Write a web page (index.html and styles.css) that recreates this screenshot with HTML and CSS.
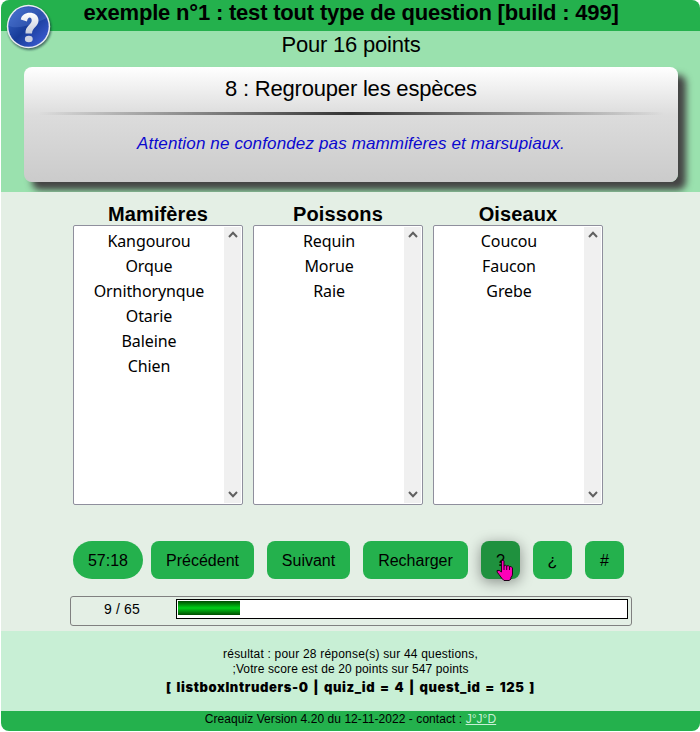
FILE: index.html
```html
<!DOCTYPE html>
<html lang="fr">
<head>
<meta charset="utf-8">
<title>Creaquiz</title>
<link rel="stylesheet" href="styles.css">
</head>
<body>
<div class="quiz">
  <header class="title"><span>exemple n°1 : test tout type de question [build : 499]</span></header>
  <svg class="help" width="50" height="52" viewBox="0 0 50 52">
    <defs>
      <linearGradient id="ball" x1="0" y1="0" x2="1" y2="1"><stop offset="0" stop-color="#3f6ed0"/><stop offset=".5" stop-color="#173b98"/><stop offset="1" stop-color="#4563df"/></linearGradient>
      <linearGradient id="mark" x1="0" y1="0" x2="0" y2="1"><stop offset="0" stop-color="#fff"/><stop offset="1" stop-color="#c5cbdc"/></linearGradient>
      <filter id="soft" x="-20%" y="-20%" width="140%" height="140%"><feGaussianBlur stdDeviation="1.2"/></filter>
    </defs>
    <circle cx="25.5" cy="25.200" r="21.800" fill="#123" opacity=".6" filter="url(#soft)"/>
    <circle cx="24.500" cy="23.500" r="21.700" fill="#e9ecf2"/>
    <circle cx="24.500" cy="23.500" r="20.200" fill="url(#ball)"/>
    <path d="M4.800 23C15 27 29 21 43 15C37 1 12 0 5.700 17Z" fill="#5b82d8" opacity=".35"/>
    <path d="M16.800 16.500C18 7 34.800 7.500 34.500 17.500C34.300 24 28.300 24 28 30.500H21.500C21 22.500 27.700 22 27.700 17.400C27.700 13.500 23.500 13.500 23 18.500Z" fill="url(#mark)"/>
    <ellipse cx="24.800" cy="36" rx="3.900" ry="3.200" fill="#ccd1e2"/>
  </svg>
  <section class="intro">
    <div class="points"><span>Pour 16 points</span></div>
    <div class="card">
      <h1><span>8 : Regrouper les espèces</span></h1>
      <div class="rule"></div>
      <p><span>Attention ne confondez pas mammifères et marsupiaux.</span></p>
    </div>
  </section>
  <main>
    <div class="lists">
      <div class="group"><h2>Mamifères</h2><div class="listbox"><ul><li>Kangourou</li><li>Orque</li><li>Ornithorynque</li><li>Otarie</li><li>Baleine</li><li>Chien</li></ul>
        <div class="scroll"><svg width="10" height="7" viewBox="0 0 10 7"><path d="M1 6L5 1.800L9 6"/></svg><svg width="10" height="7" viewBox="0 0 10 7"><path d="M1 1L5 5.200L9 1"/></svg></div></div></div>
      <div class="group"><h2>Poissons</h2><div class="listbox"><ul><li>Requin</li><li>Morue</li><li>Raie</li></ul>
        <div class="scroll"><svg width="10" height="7" viewBox="0 0 10 7"><path d="M1 6L5 1.800L9 6"/></svg><svg width="10" height="7" viewBox="0 0 10 7"><path d="M1 1L5 5.200L9 1"/></svg></div></div></div>
      <div class="group"><h2>Oiseaux</h2><div class="listbox"><ul><li>Coucou</li><li>Faucon</li><li>Grebe</li></ul>
        <div class="scroll"><svg width="10" height="7" viewBox="0 0 10 7"><path d="M1 6L5 1.800L9 6"/></svg><svg width="10" height="7" viewBox="0 0 10 7"><path d="M1 1L5 5.200L9 1"/></svg></div></div></div>
    </div>
    <div class="buttons">
      <div class="btn timer">57:18</div>
      <div class="btn prev">Précédent</div>
      <div class="btn next">Suivant</div>
      <div class="btn reload">Recharger</div>
      <div class="btn small active">?<svg class="hand" width="18" height="23" viewBox="0 0 18 23"><path d="M6 1.500Q7.500 .5 8 2V7Q9.500 5.500 10.700 7Q12.300 6 13.500 7.500Q15.500 7 16.500 9V15Q16.500 17 15 18.500V20L13 21.500H8L6 19.500L3 15.500Q.5 13 1 11.500Q3 10.500 5.500 13V2Z" fill="#ff00b8" stroke="#200018"/><path d="M8 7V11M10.700 7V11M13.500 7.500V11" stroke="#200018" fill="none"/></svg></div>
      <div class="btn small">¿</div>
      <div class="btn small">#</div>
    </div>
    <div class="progress"><span class="count">9 / 65</span><div class="track"><div class="bar"></div></div></div>
  </main>
  <section class="result">
    <div class="score">résultat : pour 28 réponse(s) sur 44 questions,</div>
    <div class="score total">;Votre score est de 20 points sur 547 points</div>
    <div class="ids">[ listboxIntruders-0 | quiz_id = 4 | quest_id = 125 ]</div>
  </section>
  <footer><span>Creaquiz Version 4.20 du 12-11-2022 - contact : <a href="#">J°J°D</a></span></footer>
</div>
</body>
</html>
```
FILE: styles.css
```css
* { box-sizing: border-box; }
body { margin: 0; background: #fff; color: #000; font-family: "Liberation Sans", Arial, sans-serif; overflow: hidden; }
h1, h2, p, ul { margin: 0; padding: 0; }
.quiz { position: relative; margin-left: 1px; height: 731px; border-radius: 8px; overflow: hidden; text-align: center; }
.title { height: 31px; padding-left: 1px; background: #24b14d; font-size: 22px; line-height: 25px; font-weight: bold; letter-spacing: -.19px; white-space: nowrap; }
.help { position: absolute; left: 3px; top: 3px; }
.intro { height: 161px; background: #9ae1ae; overflow: hidden; }
.points { height: 36px; font-size: 22px; line-height: 27px; letter-spacing: -.2px; padding-left: 1px; }
.card { margin: 0 22px 0 23px; height: 115px; border-radius: 8px; background: linear-gradient(#fff, #dcdcdc 42%, #cbcbcb); box-shadow: 8px 8px 7px #444; }
h1 { height: 45px; font-size: 22px; line-height: 43px; font-weight: normal; letter-spacing: -.2px; }
.rule { height: 3px; margin: 0 14px; background: linear-gradient(90deg, transparent, #333 50%, transparent); }
p { font-size: 17px; font-style: italic; line-height: 20px; padding-top: 19px; color: #0b08cf; letter-spacing: .14px; }
main { height: 439px; background: #e4efe5; }
.lists { display: flex; gap: 10px; padding: 10px 0 0 72px; }
.group { width: 170px; }
h2 { height: 23px; line-height: 24px; font-size: 20px; letter-spacing: .12px; }
.listbox { height: 280px; display: flex; padding: 1px; background: #fff; border: 1px solid #8f8f9d; border-radius: 2px; }
ul { flex: 1; list-style: none; padding: 2px 1px 0 0; }
li { height: 25px; font: 16px/25px "Noto Sans", sans-serif; letter-spacing: -.1px; }
.scroll { width: 17px; background: #f0f0f0; display: flex; flex-direction: column; justify-content: space-between; align-items: center; padding: 4px 0 5px; }
.scroll path { fill: none; stroke: #606060; stroke-width: 2; }
.buttons { display: flex; padding: 36px 0 0 72px; }
.btn { position: relative; height: 38px; line-height: 39px; background: #24b14d; border-radius: 8px; font-size: 16px; margin-right: 13px; }
.timer { width: 70px; border-radius: 19px; margin-right: 8px; }
.prev { width: 103px; }
.next { width: 83px; }
.reload { width: 105px; }
.small { width: 39px; }
.active { background: #1f913e; box-shadow: 0 3px 14px rgba(0,0,0,.4); }
.hand { position: absolute; left: 15px; top: 18px; }
.progress { display: flex; width: 562px; height: 30px; margin: 17px 0 0 69px; border: 1px solid #808080; border-radius: 3px; }
.count { width: 105px; padding-right: 3px; font-size: 14px; line-height: 25px; letter-spacing: .15px; }
.track { width: 452px; height: 20px; margin-top: 2px; padding: 1px; border: 1px solid #000; background: #fff; }
.bar { width: 62px; height: 14px; background: linear-gradient(#004b00, #00d018 50%, #004b00); }
.result { height: 80px; padding-top: 16px; background: #c8efd5; }
.score { font-size: 12px; line-height: 15px; letter-spacing: .2px; }
.total { letter-spacing: .12px; }
.ids { font: 900 13px/22px Inter, sans-serif; letter-spacing: .6px; word-spacing: 1.6px; white-space: nowrap; margin-top: -1px; }
footer { height: 20px; background: #24b14d; font-size: 12px; line-height: 16px; letter-spacing: .06px; }
a { color: #c8efd5; }
```
